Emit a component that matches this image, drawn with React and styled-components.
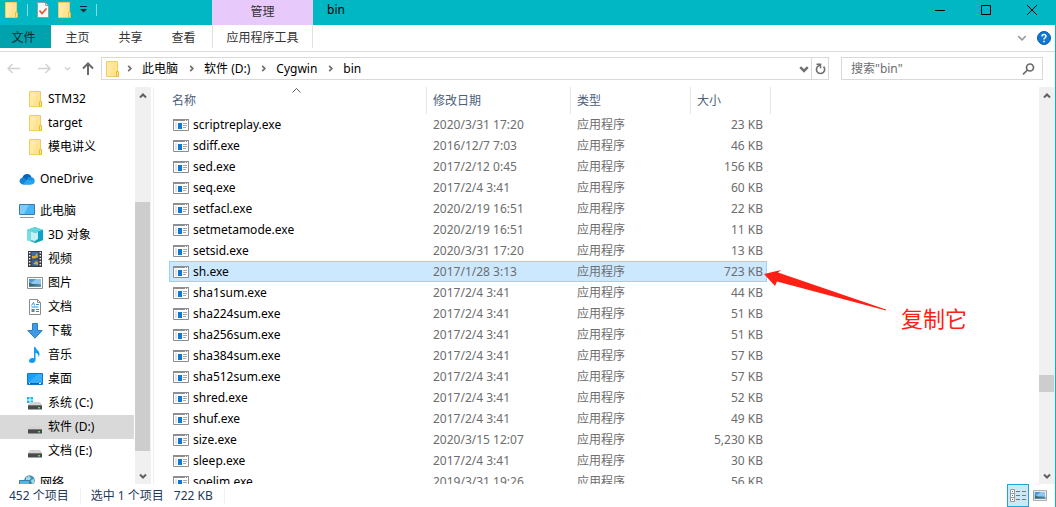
import React from 'react';
import styled, { createGlobalStyle, css } from 'styled-components';

const GlobalStyle = createGlobalStyle`
  * {
    box-sizing: border-box;
  }
  body {
    margin: 0;
    background: #ffffff;
    font-family: 'Noto Sans', 'Noto Sans CJK SC', sans-serif;
    font-size: 12px;
    line-height: 16px;
    color: #000000;
  }
  button, input {
    font: inherit;
    color: inherit;
    border: 0;
    padding: 0;
    background: none;
  }
  a {
    color: inherit;
    text-decoration: none;
  }
  svg {
    display: block;
    flex: none;
  }
`;

const Window = styled.div`
  height: 100vh;
  display: flex;
  flex-direction: column;
  overflow: hidden;
  border-right: 1px solid #00b7c3;
`;

/* title bar */
const TitleBar = styled.header`
  height: 25px;
  flex: none;
  display: flex;
  background: #00b7c3;
`;

const QuickAccess = styled.div`
  width: 212px;
  height: 19px;
  padding-left: 5px;
  display: flex;
  align-items: center;
  gap: 9px;
`;

const QuickLine = styled.span`
  width: 1px;
  height: 12px;
  background: #8ad9df;
`;

const ContextTitle = styled.div`
  width: 101px;
  padding-top: 4px;
  text-align: center;
  color: #333333;
  background: #e8c9fb;
`;

const WindowTitle = styled.h1`
  flex: 1;
  margin: 0;
  padding: 2px 14px;
  font-size: 12px;
  font-weight: normal;
`;

const WindowButton = styled.button`
  width: 46px;
  height: 19px;
  display: flex;
  align-items: center;
  justify-content: center;
`;

/* ribbon */
const Ribbon = styled.nav`
  height: 27px;
  flex: none;
  display: flex;
  align-items: flex-start;
  border-bottom: 1px solid #dadbdc;
`;

const Tab = styled.button`
  width: 53px;
  height: 23px;
  padding-top: 2px;
  color: #333333;

  ${({ $file }) => $file && css`
    width: 51px;
    padding-right: 4px;
    color: #0b2b2f;
    background: #00a2ad;
  `}

  ${({ $context }) => $context && css`
    width: 101px;
    margin-left: 2px;
    border: solid #e1e1e1;
    border-width: 0 1px;
  `}
`;

const RibbonTools = styled.div`
  margin-left: auto;
  height: 26px;
  padding-right: 4px;
  display: flex;
  align-items: center;
  gap: 10px;
`;

/* address bar */
const AddressRow = styled.div`
  flex: none;
  height: 35px;
  padding: 5px 12px 7px 7px;
  display: flex;
`;

const NavButtons = styled.div`
  width: 94px;
  flex: none;
  display: flex;
  align-items: center;
`;

const NavButton = styled.button`
  width: ${({ $width }) => $width}px;
  height: 23px;
  display: flex;
  align-items: center;
`;

const AddressBox = styled.div`
  flex: 1;
  display: flex;
  align-items: center;
  padding-left: 4px;
  border: 1px solid #d9d9d9;
`;

const Crumbs = styled.ol`
  flex: 1;
  display: flex;
  list-style: none;
  margin: 0;
  padding: 0 0 0 7px;
`;

const Crumb = styled.li`
  display: flex;
  align-items: center;
  gap: 9px;
  margin-right: 10px;
`;

const BoxButton = styled.button`
  width: ${({ $width }) => $width}px;
  height: 21px;
  display: flex;
  align-items: center;
  justify-content: center;
  border-left: ${({ $line }) => ($line ? '1px solid #d9d9d9' : '0')};
`;

const SearchBox = styled.label`
  width: 202px;
  margin-left: 12px;
  padding: 0 7px 0 9px;
  display: flex;
  align-items: center;
  border: 1px solid #d9d9d9;
`;

const SearchInput = styled.input`
  flex: 1;
  min-width: 0;
  outline: none;

  &::placeholder {
    color: #6d6d6d;
    opacity: 1;
  }
`;

/* body */
const Body = styled.div`
  flex: 1;
  min-height: 0;
  display: flex;
`;

const Sidebar = styled.aside`
  width: 154px;
  flex: none;
  display: flex;
  border-right: 1px solid #f0f0f0;
`;

const Tree = styled.div`
  width: 134px;
  overflow: hidden;
`;

const TreeGroup = styled.ul`
  list-style: none;
  margin: 0 0 8px;
  padding: 0;
`;

const TreeLink = styled.a`
  height: 24px;
  display: flex;
  align-items: center;
  gap: 5px;
  padding-left: ${({ $root }) => ($root ? 19 : 27)}px;
  background: ${({ $selected }) => ($selected ? '#d9d9d9' : 'none')};
`;

const ScrollTrack = styled.div`
  width: ${({ $width }) => $width}px;
  flex: none;
  margin-left: ${({ $gap }) => $gap || 0}px;
  display: flex;
  flex-direction: column;
  background: #f0f0f0;
`;

const ScrollButton = styled.button`
  width: 15px;
  height: 17px;
  flex: none;
  display: flex;
  align-items: center;
  justify-content: center;
`;

const Spacer = styled.div`
  flex: ${({ $grow }) => $grow} 1 0;
`;

const Thumb = styled.div`
  flex: none;
  width: 15px;
  height: ${({ $height }) => $height}px;
  background: #cdcdcd;
`;

const FilePane = styled.main`
  position: relative;
  flex: 1;
  min-width: 0;
  padding-left: 15px;
  overflow: hidden;
`;

const FileTable = styled.table`
  width: 602px;
  table-layout: fixed;
  border-collapse: separate;
  border-spacing: 0;
`;

const HeadCell = styled.th`
  height: 27px;
  padding: 0 0 0 ${({ $first }) => ($first ? 3 : 6)}px;
  text-align: left;
  font-weight: normal;
  color: #4c607a;
  border-right: 1px solid #e5e5e5;
`;

const HeadContent = styled.div`
  display: flex;
  justify-content: space-between;
`;

const SortMark = styled.svg`
  margin: -5px 125px 0 0;
`;

const FileRow = styled.tr`
  td {
    height: 21px;
    padding: 0 0 0 6px;
    color: #6d6d6d;
    white-space: nowrap;
  }
  td:first-child {
    padding-left: 4px;
    color: #000000;
  }
  td:last-child {
    padding-right: 4px;
    text-align: right;
  }

  ${({ $selected }) => $selected && css`
    td {
      background: #cce8ff;
      border: solid #99d1ff;
      border-width: 1px 0;
    }
    td:first-child {
      padding-left: 3px;
      border-left-width: 1px;
    }
    td:last-child {
      padding-right: 3px;
      border-right-width: 1px;
    }
  `}
`;

const FileName = styled.span`
  display: flex;
  align-items: center;
  gap: 4px;
`;

const Note = styled.div`
  position: absolute;
  left: 610px;
  top: 182px;
  display: flex;
  gap: 15px;
  font-size: 22px;
  line-height: 32px;
  color: #ff2015;
`;

const NoteText = styled.span`
  padding-top: 33px;
`;

/* status bar */
const StatusBar = styled.footer`
  height: 23px;
  flex: none;
  display: flex;
  align-items: center;
  padding: 0 7px 0 9px;
  color: #1e395b;
`;

const StatusItem = styled.span`
  padding-right: 11px;
  margin-right: 10px;
  border-right: 1px solid #f0f0f0;
`;

const StatusSize = styled.span`
  margin-left: 10px;
`;

const ViewButtons = styled.div`
  margin-left: auto;
  display: flex;
  gap: 3px;
`;

const ViewButton = styled.button`
  width: ${({ $active }) => ($active ? 22 : 16)}px;
  height: 23px;
  display: flex;
  align-items: center;
  justify-content: center;
  border: ${({ $active }) => ($active ? '1px solid #26a0da' : '0')};
  background: ${({ $active }) => ($active ? '#cbe8f6' : 'none')};
`;

/* icons */
const Chevron = ({ dir = 'down', size = 8, color = '#606060', width = 2 }) => {
  const paths = {
    down: 'M1 2.5 4 5.5 7 2.5',
    up: 'M1 5.5 4 2.5 7 5.5',
    right: 'M2.5 1 5.5 4 2.5 7',
  };
  return (
    <svg width={size} height={size} viewBox="0 0 8 8" fill="none" stroke={color} strokeWidth={width}>
      <path d={paths[dir]} />
    </svg>
  );
};

const FolderIcon = () => (
  <svg width="13" height="16" viewBox="0 0 13 16">
    <path d="M.5.5h11v15H.5z" fill="#ffe48f" stroke="#efcd63" />
    <path d="M1 1h7L4 15H1z" fill="#ffe9a3" />
    <path d="M10.500 10.500h2v5h-2z" fill="#ffe48f" stroke="#e6bb40" />
  </svg>
);

const CheckDocIcon = () => (
  <svg width="12" height="16" viewBox="0 0 12 16">
    <path d="M.5.5h8l3 3v12H.5z" fill="#f8f8f8" stroke="#8f9ea3" />
    <path d="M8.500.5v3h3" fill="none" stroke="#8f9ea3" />
    <path d="m2.500 8.500 2.500 3 4.500-5" fill="none" stroke="#e8562a" strokeWidth="1.700" />
  </svg>
);

const CloudIcon = () => (
  <svg width="16" height="12" viewBox="0 0 16 12">
    <path d="M3.500 4.500A4.800 4.800 0 0 1 12.500 4l-4 5L3 8z" fill="#0764b8" />
    <path d="M3.500 11.500a3.500 3.500 0 1 1 2.300-6.500l6 6.500z" fill="#1385d8" />
    <path d="M12.300 4.200a3.700 3.700 0 0 1 .5 7.300H4L8.500 6z" fill="#27a5ee" />
    <path d="M8 4.500c2-1 4.200-.6 5.200.2l2 2.800-4.700-.3z" fill="#1490df" />
  </svg>
);

const ComputerIcon = () => (
  <svg width="16" height="16" viewBox="0 0 16 16">
    <path d="M.5 1.500h15v10H.5z" fill="#45b5f7" stroke="#3c7ba8" />
    <path d="M1 2h9l-5 9H1z" fill="#7bcdfb" />
    <path d="M1 14.500h14" stroke="#8c9ba5" />
  </svg>
);

const CubeIcon = () => (
  <svg width="16" height="16" viewBox="0 0 16 16">
    <path d="m8 0 8 3v10l-8 3-8-3V3z" fill="#31bdcf" />
    <path d="m8 0 8 3-8 3-8-3z" fill="#63d5de" />
    <path d="M0 3l4 1.500v10L0 13z" fill="#7adbe4" />
    <path d="m8 6 8-3v10l-8 3z" fill="#119db5" />
    <path d="m4 4.500 4 1.500 3-1v7l-3 2-4-1z" fill="#c4f1f4" />
    <path d="m11 5 5-2v10l-5-1z" fill="#0fa0cc" />
  </svg>
);

const VideoIcon = () => (
  <svg width="16" height="16" viewBox="0 0 16 16">
    <path d="M1 0h14v16H1z" fill="#3c3c3c" />
    <path d="M4.500 1h7v6.500h-7z" fill="#3b6ea8" />
    <path d="M4.500 8.500h7V15h-7z" fill="#355f9e" />
    <path d="M5 5h3l2-3 1 4-3 1.500H5zM6 13l3-3 2 1v3z" fill="#d3a63a" />
    <path d="M2.700 1v14M13.300 1v14" stroke="#eeeeee" strokeWidth="1.500" strokeDasharray="1.500 1.500" />
  </svg>
);

const PictureIcon = ({ width = 16, height = 12 }) => (
  <svg width={width} height={height} viewBox="0 0 16 12">
    <path d="M.5.5h15v11H.5z" fill="#ffffff" stroke="#8f8f8f" />
    <path d="M2 2h12v8H2z" fill="#8fc7ee" />
    <path d="M2 2h7L5 5 2 6z" fill="#4e97da" />
    <path d="M2 5.500 6 7l8 .5V10H2z" fill="#3d6d77" />
    <path d="M2 9.500 14 8v2H2z" fill="#5f94b0" />
  </svg>
);

const DocumentIcon = () => (
  <svg width="16" height="16" viewBox="0 0 16 16">
    <path d="M2.500.5h8l3 3v12h-11z" fill="#ffffff" stroke="#8a8a8a" />
    <path d="M10.500.5v3h3" fill="none" stroke="#8a8a8a" />
    <path d="m4.500 6.500 2-3 1 3M9 5.500h3M4.500 8h7M9 10.500h3M9 12.500h3" fill="none" stroke="#3c8dc5" />
    <path d="M4.500 10h3v3h-3z" fill="#3c8dc5" />
  </svg>
);

const DownloadIcon = () => (
  <svg width="16" height="16" viewBox="0 0 16 16">
    <path d="M5.500.5h5v7h4.700L8 15.200.8 7.500h4.700z" fill="#3f9ae5" stroke="#2b7fc6" />
  </svg>
);

const MusicIcon = () => (
  <svg width="16" height="16" viewBox="0 0 16 16">
    <path d="M7 0h1.500c.3 3 4 3.500 4 7 0 1.500-.5 2.500-1 3 .3-2.500-1-3.800-3-4.300V13c0 1.700-1.500 3-3.500 3S2 15 2 13.700 3.500 11 5.500 11c.6 0 1 .1 1.500.3z" fill="#109cf1" />
  </svg>
);

const DesktopIcon = () => (
  <svg width="16" height="12" viewBox="0 0 16 12">
    <path d="M.5.5h15v11H.5z" fill="#16a0fb" stroke="#1278c4" />
    <path d="m1 10 10-9h4v9z" fill="#35aefc" />
    <path d="M1 10.500h14" stroke="#0868ae" />
    <path d="M2 10.500h1M12 10.500h2" stroke="#ffffff" />
  </svg>
);

const DriveIcon = ({ system }) => (
  <svg width="16" height="16" viewBox="0 0 16 16">
    {system && <path d="M0 2h2.500v2.500H0zM3.500 2H6v2.500H3.500zM0 5.500h2.500V8H0zM3.500 5.500H6V8H3.500z" fill="#12b5f5" />}
    <path d="M3 7h10l2 3H1z" fill="#d3d3d3" />
    <path d="M1 10h14v4.500H1z" fill="#4a4a4a" />
    <path d="M1 10.500h14" stroke="#777777" />
    <path d="M11 12h2v1.500h-2z" fill="#4be35f" />
  </svg>
);

const NetworkIcon = () => (
  <svg width="16" height="16" viewBox="0 0 16 16">
    <circle cx="10.500" cy="5.500" r="5.300" fill="#3f8fc0" />
    <path d="M7 2.500 10 1l2 2-2 3-3 .5zM12 5l3-1v4l-2 1z" fill="#a6dcd8" />
    <path d="M.5 5.500h10v7H.5z" fill="#4fb7f0" stroke="#3c7ba8" />
  </svg>
);

const ExeIcon = () => (
  <svg width="16" height="12" viewBox="0 0 16 12">
    <path d="M.5.5h15v11H.5z" fill="#ffffff" stroke="#8b8f93" />
    <path d="M0 0h16v2H0z" fill="#8b8f93" />
    <path d="M12 1h1v1h-1zM14 1h1v1h-1z" fill="#eeeeee" />
    <path d="M2 3h2v7H2z" fill="#e2e4e6" />
    <path d="M5 4h4v6H5z" fill="#0f78d7" />
    <path d="M10 4.500h4M10 6.500h4M10 8.500h3" stroke="#a4a7aa" />
  </svg>
);

const DetailsIcon = () => (
  <svg width="16" height="13" viewBox="0 0 16 13">
    <path d="M.5.500h4v12h-4zM.5 4.500h4M.5 8.500h4" fill="#ffffff" stroke="#999999" />
    <path d="M2 2h1v1H2zM2 6h1v1H2z" fill="#3c7ab8" />
    <path d="M2 10h1v1H2z" fill="#c0392b" />
    <path d="M6 2.500h4M12 2.500h4M6 6.500h4M12 6.500h4M6 10.500h4M12 10.500h4" stroke="#777777" />
  </svg>
);

const tree = [
  [
    { label: 'STM32', icon: <FolderIcon /> },
    { label: 'target', icon: <FolderIcon /> },
    { label: '模电讲义', icon: <FolderIcon /> },
  ],
  [{ label: 'OneDrive', icon: <CloudIcon />, root: true }],
  [
    { label: '此电脑', icon: <ComputerIcon />, root: true },
    { label: '3D 对象', icon: <CubeIcon /> },
    { label: '视频', icon: <VideoIcon /> },
    { label: '图片', icon: <PictureIcon /> },
    { label: '文档', icon: <DocumentIcon /> },
    { label: '下载', icon: <DownloadIcon /> },
    { label: '音乐', icon: <MusicIcon /> },
    { label: '桌面', icon: <DesktopIcon /> },
    { label: '系统 (C:)', icon: <DriveIcon system /> },
    { label: '软件 (D:)', icon: <DriveIcon />, selected: true },
    { label: '文档 (E:)', icon: <DriveIcon /> },
  ],
  [{ label: '网络', icon: <NetworkIcon />, root: true }],
];

const IconSlot = styled.span`
  width: 16px;
  flex: none;
  display: flex;
  justify-content: center;
`;

const files = [
  ['scriptreplay.exe', '2020/3/31 17:20', '23 KB'],
  ['sdiff.exe', '2016/12/7 7:03', '46 KB'],
  ['sed.exe', '2017/2/12 0:45', '156 KB'],
  ['seq.exe', '2017/2/4 3:41', '60 KB'],
  ['setfacl.exe', '2020/2/19 16:51', '22 KB'],
  ['setmetamode.exe', '2020/2/19 16:51', '11 KB'],
  ['setsid.exe', '2020/3/31 17:20', '13 KB'],
  ['sh.exe', '2017/1/28 3:13', '723 KB'],
  ['sha1sum.exe', '2017/2/4 3:41', '44 KB'],
  ['sha224sum.exe', '2017/2/4 3:41', '51 KB'],
  ['sha256sum.exe', '2017/2/4 3:41', '51 KB'],
  ['sha384sum.exe', '2017/2/4 3:41', '57 KB'],
  ['sha512sum.exe', '2017/2/4 3:41', '57 KB'],
  ['shred.exe', '2017/2/4 3:41', '52 KB'],
  ['shuf.exe', '2017/2/4 3:41', '49 KB'],
  ['size.exe', '2020/3/15 12:07', '5,230 KB'],
  ['sleep.exe', '2017/2/4 3:41', '30 KB'],
  ['soelim.exe', '2019/3/31 19:26', '56 KB'],
];

const Scrollbar = ({ before, after, thumb, width, gap }) => (
  <ScrollTrack $width={width} $gap={gap}>
    <ScrollButton aria-label="向上滚动"><Chevron dir="up" /></ScrollButton>
    <Spacer $grow={before} />
    <Thumb $height={thumb} />
    <Spacer $grow={after} />
    <ScrollButton aria-label="向下滚动"><Chevron /></ScrollButton>
  </ScrollTrack>
);

const Title = () => (
  <TitleBar>
    <QuickAccess>
      <FolderIcon />
      <QuickLine />
      <CheckDocIcon />
      <FolderIcon />
      <svg width="7" height="7" viewBox="0 0 7 7">
        <path d="M0 0h7v1H0zM0 3h7L3.500 6.500z" fill="#0b2b2f" />
      </svg>
      <QuickLine />
    </QuickAccess>
    <ContextTitle>管理</ContextTitle>
    <WindowTitle>bin</WindowTitle>
    <WindowButton aria-label="最小化">
      <svg width="10" height="10"><path d="M0 5.500h10" stroke="#000000" /></svg>
    </WindowButton>
    <WindowButton aria-label="最大化">
      <svg width="10" height="10"><path d="M.5.5h9v9h-9z" fill="none" stroke="#000000" /></svg>
    </WindowButton>
    <WindowButton aria-label="关闭">
      <svg width="10" height="10"><path d="m0 0 10 10M10 0 0 10" stroke="#000000" /></svg>
    </WindowButton>
  </TitleBar>
);

const Address = () => (
  <AddressRow>
    <NavButtons>
      <NavButton $width={31} aria-label="后退">
        <svg width="13" height="11" fill="none" stroke="#d2d2d2" strokeWidth="1.500"><path d="M13 5.500H1M5.500 1 1 5.500 5.500 10" /></svg>
      </NavButton>
      <NavButton $width={26} aria-label="前进">
        <svg width="13" height="11" fill="none" stroke="#d2d2d2" strokeWidth="1.500"><path d="M0 5.500h12M7.500 1 12 5.500 7.500 10" /></svg>
      </NavButton>
      <NavButton $width={18} aria-label="最近浏览的位置">
        <Chevron size={7} color="#d2d2d2" width={1.5} />
      </NavButton>
      <NavButton $width={19} aria-label="上移">
        <svg width="12" height="13" fill="none" stroke="#6a6a6a" strokeWidth="2"><path d="M6 13V2M1 6.500l5-5 5 5" /></svg>
      </NavButton>
    </NavButtons>
    <AddressBox>
      <FolderIcon />
      <Crumbs>
        {['此电脑', '软件 (D:)', 'Cygwin', 'bin'].map((name) => (
          <Crumb key={name}>
            <Chevron dir="right" size={7} color="#707070" />
            <a href="#">{name}</a>
          </Crumb>
        ))}
      </Crumbs>
      <BoxButton $width={15} aria-label="展开"><Chevron size={10} color="#707070" /></BoxButton>
      <BoxButton $width={17} $line aria-label="刷新">
        <svg width="11" height="12" fill="none" stroke="#707070" strokeWidth="1.600">
          <path d="M8.500 3.600A4.100 4.100 0 1 1 2.800 3.400L5 1.500M1.500 1.300h4v4" />
        </svg>
      </BoxButton>
    </AddressBox>
    <SearchBox>
      <SearchInput type="text" aria-label="搜索" placeholder={'搜索"bin"'} />
      <svg width="13" height="12" fill="none" stroke="#6a6a6a" strokeWidth="1.700">
        <circle cx="8" cy="4.500" r="3.500" />
        <path d="M5.500 7 1 11.300" />
      </svg>
    </SearchBox>
  </AddressRow>
);

const Files = () => (
  <FilePane>
    <FileTable>
      <colgroup>
        <col style={{ width: 258 }} />
        <col style={{ width: 144 }} />
        <col style={{ width: 120 }} />
        <col style={{ width: 76 }} />
        <col />
      </colgroup>
      <thead>
        <tr>
          <HeadCell $first>
            <HeadContent>
              名称
              <SortMark width="9" height="5" fill="none" stroke="#606060">
                <path d="M.5 4.500l4-4 4 4" />
              </SortMark>
            </HeadContent>
          </HeadCell>
          <HeadCell>修改日期</HeadCell>
          <HeadCell>类型</HeadCell>
          <HeadCell colSpan={2}>大小</HeadCell>
        </tr>
      </thead>
      <tbody>
        {files.map(([name, date, size]) => (
          <FileRow key={name} $selected={name === 'sh.exe'}>
            <td><FileName><ExeIcon />{name}</FileName></td>
            <td>{date}</td>
            <td>应用程序</td>
            <td>{size}</td>
          </FileRow>
        ))}
      </tbody>
    </FileTable>
    <Note>
      <svg width="122" height="44" viewBox="0 0 122 44">
        <path d="M0 5 17 1l-3 2.500L122 40.500v1L13 12.500l-2 4.500z" fill="#ff2015" />
      </svg>
      <NoteText>复制它</NoteText>
    </Note>
  </FilePane>
);

const App = () => {
  return (
    <>
      <GlobalStyle />
      <Window>
        <Title />
        <Ribbon>
          <Tab $file>文件</Tab>
          <Tab>主页</Tab>
          <Tab>共享</Tab>
          <Tab>查看</Tab>
          <Tab $context>应用程序工具</Tab>
          <RibbonTools>
            <Chevron size={10} color="#999999" width={1.2} />
            <svg width="14" height="14" viewBox="0 0 14 14">
              <circle cx="7" cy="7" r="6.500" fill="#0f78d4" stroke="#0a5ba8" />
              <path d="M5 5.500C5 3 9 3 9 5.300 9 6.800 7 6.700 7 8.500M7 9.700v1.500" fill="none" stroke="#ffffff" strokeWidth="1.500" />
            </svg>
          </RibbonTools>
        </Ribbon>
        <Address />
        <Body>
          <Sidebar>
            <Tree>
              {tree.map((group) => (
                <TreeGroup key={group[0].label}>
                  {group.map(({ label, icon, root, selected }) => (
                    <li key={label}>
                      <TreeLink href="#" $root={root} $selected={selected}>
                        <IconSlot>{icon}</IconSlot>
                        {label}
                      </TreeLink>
                    </li>
                  ))}
                </TreeGroup>
              ))}
            </Tree>
            <Scrollbar width={16} gap={1} before={98} thumb={249} after={16} />
          </Sidebar>
          <Files />
          <Scrollbar width={16} before={271} thumb={17} after={75} />
        </Body>
        <StatusBar>
          <StatusItem>452 个项目</StatusItem>
          <StatusItem>
            选中 1 个项目
            <StatusSize>722 KB</StatusSize>
          </StatusItem>
          <ViewButtons>
            <ViewButton $active aria-label="详细信息"><DetailsIcon /></ViewButton>
            <ViewButton aria-label="大图标"><PictureIcon width={14} height={11} /></ViewButton>
          </ViewButtons>
        </StatusBar>
      </Window>
    </>
  );
};

export default App;
